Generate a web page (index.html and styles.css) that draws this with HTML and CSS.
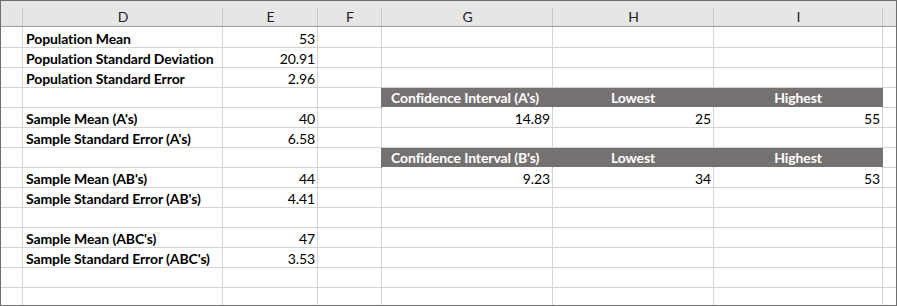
FILE: index.html
```html
<!DOCTYPE html>
<html>
<head>
<meta charset="utf-8">
<link rel="stylesheet" href="styles.css">
</head>
<body>
<div class="sheet">
  <div class="hd corner"></div><div class="hd">D</div><div class="hd">E</div><div class="hd">F</div><div class="hd">G</div><div class="hd">H</div><div class="hd">I</div><div class="hd last"></div>

  <div class="c rn"></div><div class="c b">Population Mean</div><div class="c n">53</div><div class="c"></div><div class="c"></div><div class="c"></div><div class="c"></div><div class="c last"></div>
  <div class="c rn"></div><div class="c b">Population Standard Deviation</div><div class="c n">20.91</div><div class="c"></div><div class="c"></div><div class="c"></div><div class="c"></div><div class="c last"></div>
  <div class="c rn"></div><div class="c b">Population Standard Error</div><div class="c n">2.96</div><div class="c"></div><div class="c"></div><div class="c"></div><div class="c"></div><div class="c last"></div>
  <div class="c rn"></div><div class="c"></div><div class="c"></div><div class="c"></div><div class="c band first">Confidence Interval (A's)</div><div class="c band mid">Lowest</div><div class="c band mid">Highest</div><div class="c last"></div>
  <div class="c rn"></div><div class="c b">Sample Mean (A's)</div><div class="c n">40</div><div class="c"></div><div class="c n">14.89</div><div class="c n">25</div><div class="c n">55</div><div class="c last"></div>
  <div class="c rn"></div><div class="c b">Sample Standard Error (A's)</div><div class="c n">6.58</div><div class="c"></div><div class="c"></div><div class="c"></div><div class="c"></div><div class="c last"></div>
  <div class="c rn"></div><div class="c"></div><div class="c"></div><div class="c"></div><div class="c band first">Confidence Interval (B's)</div><div class="c band mid">Lowest</div><div class="c band mid">Highest</div><div class="c last"></div>
  <div class="c rn"></div><div class="c b">Sample Mean (AB's)</div><div class="c n">44</div><div class="c"></div><div class="c n">9.23</div><div class="c n">34</div><div class="c n">53</div><div class="c last"></div>
  <div class="c rn"></div><div class="c b">Sample Standard Error (AB's)</div><div class="c n">4.41</div><div class="c"></div><div class="c"></div><div class="c"></div><div class="c"></div><div class="c last"></div>
  <div class="c rn"></div><div class="c"></div><div class="c"></div><div class="c"></div><div class="c"></div><div class="c"></div><div class="c"></div><div class="c last"></div>
  <div class="c rn"></div><div class="c b">Sample Mean (ABC's)</div><div class="c n">47</div><div class="c"></div><div class="c"></div><div class="c"></div><div class="c"></div><div class="c last"></div>
  <div class="c rn"></div><div class="c b">Sample Standard Error (ABC's)</div><div class="c n">3.53</div><div class="c"></div><div class="c"></div><div class="c"></div><div class="c"></div><div class="c last"></div>
  <div class="c rn"></div><div class="c"></div><div class="c"></div><div class="c"></div><div class="c"></div><div class="c"></div><div class="c"></div><div class="c last"></div>
  <div class="c rn end"></div><div class="c end"></div><div class="c end"></div><div class="c end"></div><div class="c end"></div><div class="c end"></div><div class="c end"></div><div class="c last end"></div>
</div>
</body>
</html>
```

FILE: styles.css
```css
html, body {
  margin: 0;
  padding: 0;
  background: #ffffff;
}

.sheet {
  box-sizing: border-box;
  width: 897px;
  height: 306px;
  border: 1px solid #6e6e6e;
  display: grid;
  grid-template-columns: 22px 200px 95px 64px 171px 161px 169px 13px;
  grid-template-rows: 26px 21px repeat(12, 20px) 1fr;
  font-family: Lato, "Liberation Sans", sans-serif;
  font-size: 14px;
  color: #000;
  overflow: hidden;
}

.hd {
  box-sizing: border-box;
  background: #e6e6e6;
  border-bottom: 1px solid #9e9e9e;
  display: flex;
  align-items: center;
  justify-content: center;
  padding-top: 6px;
  color: #222;
  position: relative;
}

.hd::after {
  content: "";
  position: absolute;
  right: 0;
  top: 7px;
  bottom: 0;
  width: 1px;
  background: #c6c6c6;
}

.hd.last::after {
  display: none;
}

.c {
  box-sizing: border-box;
  border-right: 1px solid #d4d4d4;
  border-bottom: 1px solid #d4d4d4;
  display: flex;
  align-items: flex-end;
  padding: 0 3px 0 3px;
  white-space: nowrap;
  line-height: 17px;
  letter-spacing: -0.1px;
}

.c.last {
  border-right: none;
}

.c.end {
  border-bottom: none;
}

.b {
  font-weight: 700;
}

.n {
  justify-content: flex-end;
  padding-right: 2px;
}

.band {
  background: #767171;
  border-right-color: #767171;
  border-bottom-color: #ffffff;
  color: #ffffff;
  font-weight: 700;
  padding-bottom: 1px;
}

.band.first {
  padding-left: 9px;
  box-shadow: -1px 0 0 #767171;
}

.band.mid {
  justify-content: center;
}
```
